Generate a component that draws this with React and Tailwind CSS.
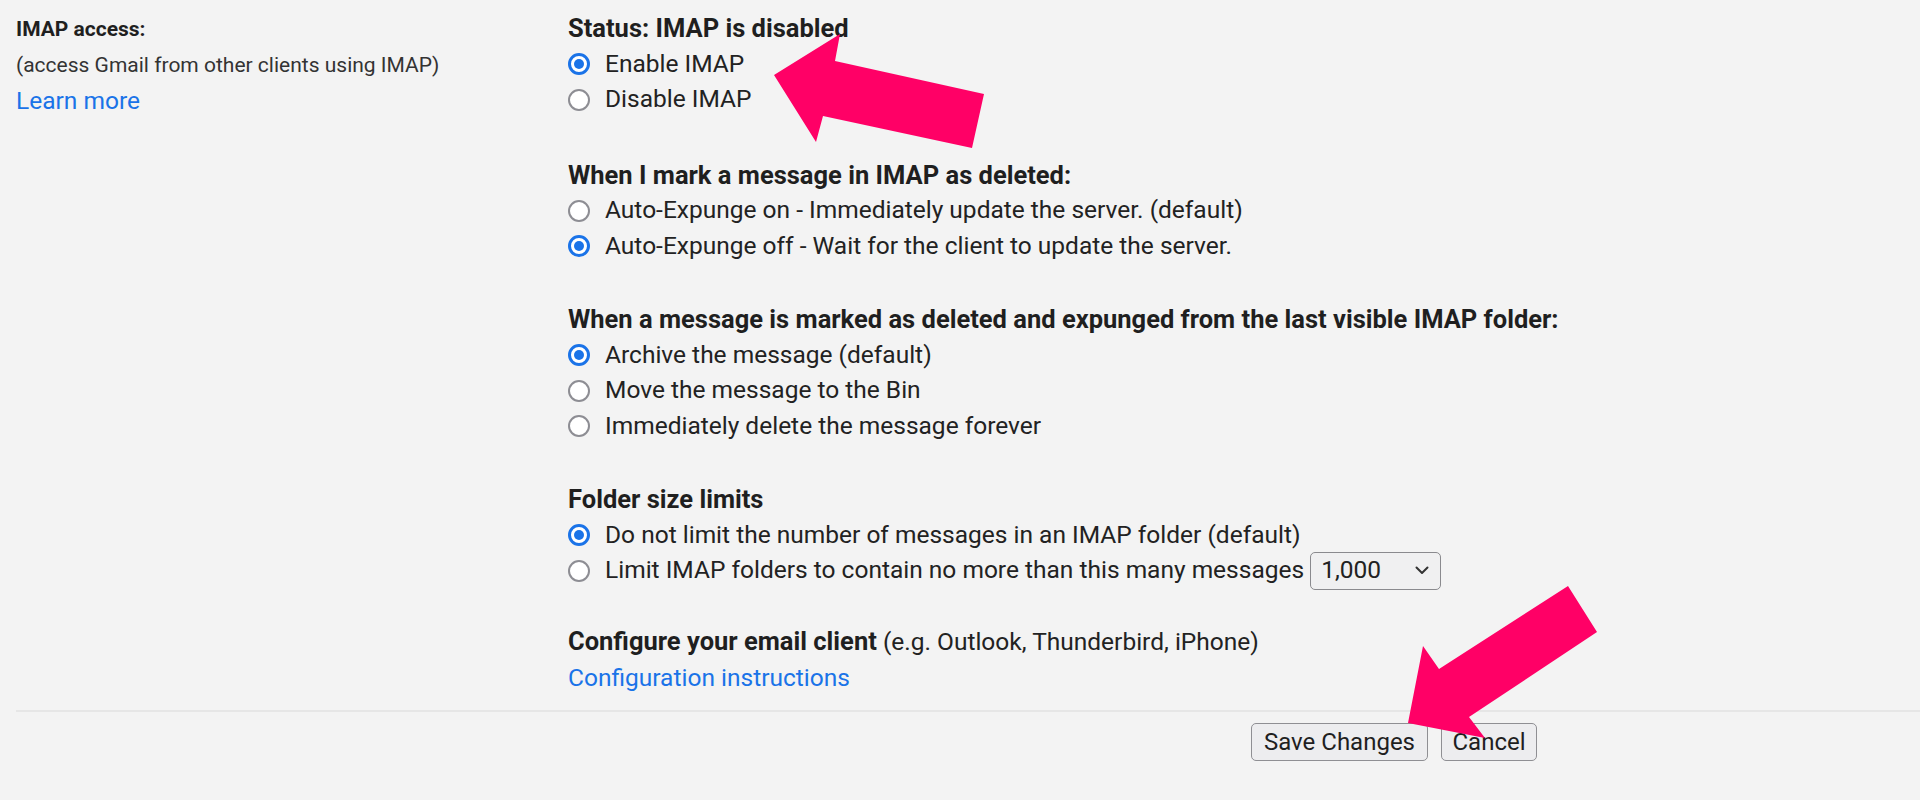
const FONT = "font-['Roboto','Liberation_Sans',Arial,sans-serif]";

function Radio({ checked }) {
  return checked ? (
    <span className="flex h-[22px] w-[22px] shrink-0 items-center justify-center rounded-full border-[3px] border-[#1a73e8] bg-white">
      <span className="h-[10px] w-[10px] rounded-full bg-[#1a73e8]" />
    </span>
  ) : (
    <span className="h-[22px] w-[22px] shrink-0 rounded-full border-[2.5px] border-[#8d8d93] bg-white" />
  );
}

function Option({ checked, children }) {
  return (
    <label className="flex h-[35.5px] items-center gap-[15px] text-[24.5px] text-[#222]">
      <Radio checked={checked} />
      <span className="flex items-center gap-[6px]">{children}</span>
    </label>
  );
}

function Group({ title, options, className = '' }) {
  return (
    <div className={className}>
      <div className="h-[35.5px] leading-[35.5px] text-[25.5px] font-bold text-[#1f1f1f]">{title}</div>
      {options.map((o, i) => (
        <Option key={i} checked={o.checked}>{o.label}</Option>
      ))}
    </div>
  );
}

function Select() {
  return (
    <span className="flex h-[38px] w-[131px] items-center justify-between rounded-[5px] border border-[#8a8a8e] bg-[#f0f0f1] pl-[10px] pr-[11px] text-[24.5px] text-[#222]">
      1,000
      <svg width="14" height="9" viewBox="0 0 14 9" fill="none">
        <path d="M1.5 1.5 L7 7 L12.5 1.5" stroke="#333" strokeWidth="2" strokeLinecap="round" strokeLinejoin="round" />
      </svg>
    </span>
  );
}

export default function App() {
  return (
    <div className={`relative min-h-[800px] bg-[#f3f3f3] ${FONT} antialiased`}>
      <div className="flex pt-[11px]">
        <div className="w-[568px] shrink-0 pl-4">
          <div className="h-[36px] leading-[36px] text-[21px] font-bold text-[#1f1f1f]">IMAP access:</div>
          <div className="h-[36px] leading-[36px] text-[21px] text-[#333]">(access Gmail from other clients using IMAP)</div>
          <a className="block h-[36px] leading-[36px] text-[24.5px] text-[#1a73e8]">Learn more</a>
        </div>

        <div className="flex-1">
          <Group
            title="Status: IMAP is disabled"
            options={[
              { checked: true, label: 'Enable IMAP' },
              { checked: false, label: 'Disable IMAP' },
            ]}
          />
          <Group
            className="mt-[40px]"
            title="When I mark a message in IMAP as deleted:"
            options={[
              { checked: false, label: 'Auto-Expunge on - Immediately update the server. (default)' },
              { checked: true, label: 'Auto-Expunge off - Wait for the client to update the server.' },
            ]}
          />
          <Group
            className="mt-[38px]"
            title="When a message is marked as deleted and expunged from the last visible IMAP folder:"
            options={[
              { checked: true, label: 'Archive the message (default)' },
              { checked: false, label: 'Move the message to the Bin' },
              { checked: false, label: 'Immediately delete the message forever' },
            ]}
          />
          <Group
            className="mt-[38px]"
            title="Folder size limits"
            options={[
              { checked: true, label: 'Do not limit the number of messages in an IMAP folder (default)' },
              {
                checked: false,
                label: (
                  <>
                    Limit IMAP folders to contain no more than this many messages
                    <Select />
                  </>
                ),
              },
            ]}
          />

          <div className="mt-[35.5px] h-[35.5px] leading-[35.5px] text-[24.5px] text-[#222]">
            <span className="text-[25.5px] font-bold text-[#1f1f1f]">Configure your email client</span> (e.g. Outlook, Thunderbird, iPhone)
          </div>
          <a className="block h-[35.5px] leading-[35.5px] text-[24.5px] text-[#1a73e8]">Configuration instructions</a>
        </div>
      </div>

      <div className="ml-4 mt-[15px] border-t-2 border-[#e6e6e6]" />

      <div className="ml-[1251px] mt-[11px] flex gap-[13px]">
        <button className="h-[38px] w-[177px] rounded-[5px] border border-[#8f8f93] bg-[#ededef] text-[24px] text-[#1f1f1f]">
          Save Changes
        </button>
        <button className="h-[38px] w-[96px] rounded-[5px] border border-[#8f8f93] bg-[#ededef] text-[24px] text-[#1f1f1f]">
          Cancel
        </button>
      </div>

      <svg className="pointer-events-none absolute inset-0" width="1920" height="800" viewBox="0 0 1920 800">
        <polygon points="774,75 840,34 835,61 984,94 972,148 823,116 816,142" fill="#ff0066" />
        <polygon points="1408,723 1423,646 1439,669 1568,586 1597,632 1469,717 1485,738" fill="#ff0066" />
      </svg>
    </div>
  );
}
